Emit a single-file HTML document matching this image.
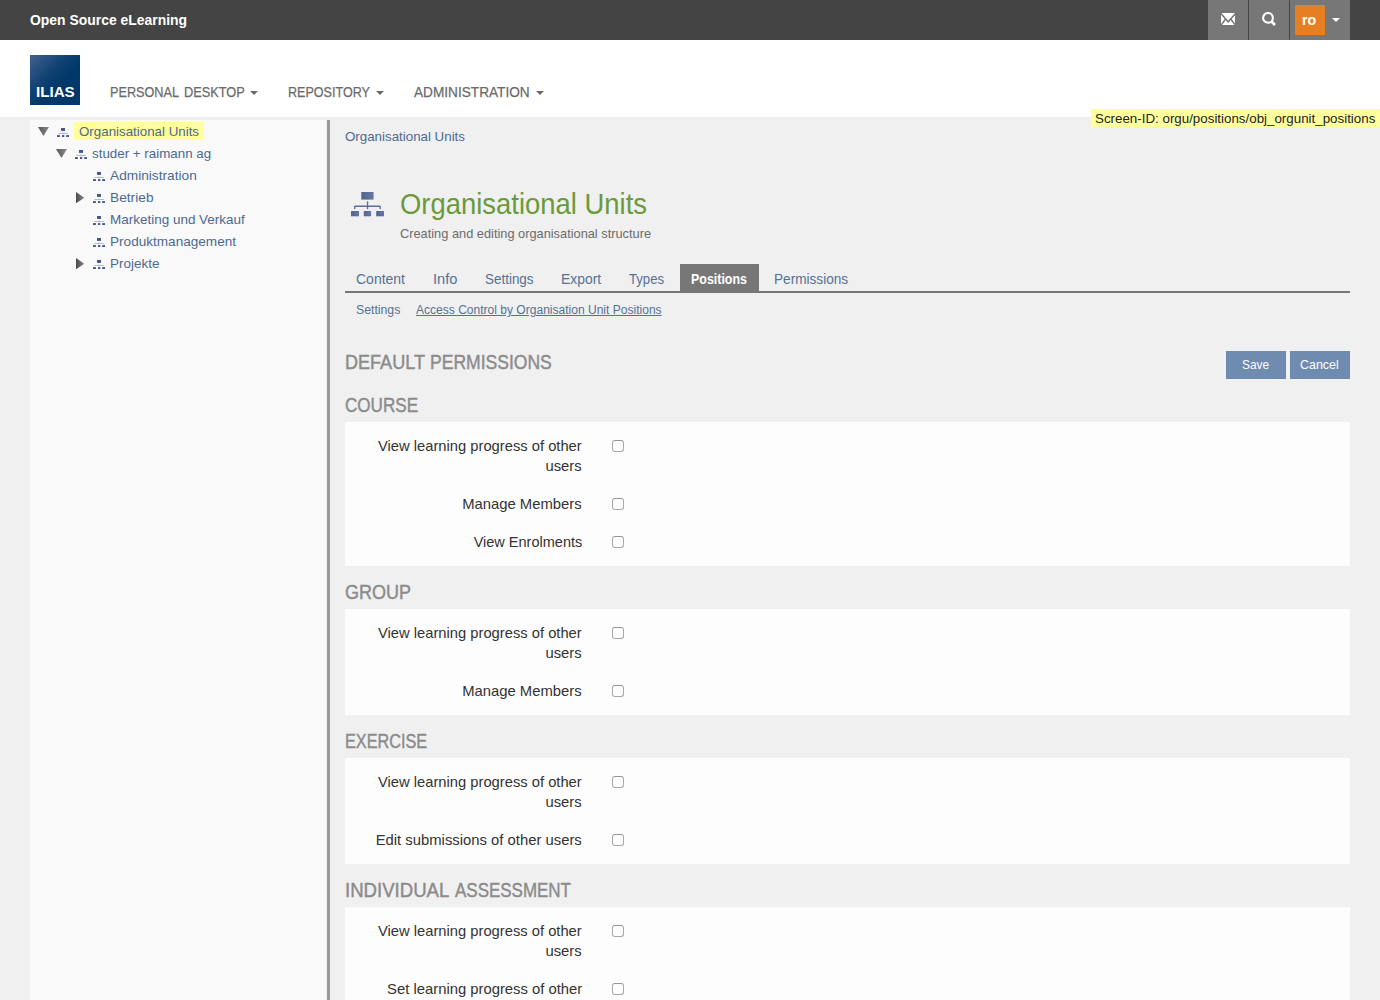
<!DOCTYPE html>
<html lang="en">
<head>
<meta charset="utf-8">
<title>Organisational Units</title>
<style>
html,body{margin:0;padding:0;}
body{width:1380px;height:1000px;overflow:hidden;position:relative;background:#f0f0f0;font-family:"Liberation Sans",sans-serif;font-size:14px;color:#222;}
.abs{position:absolute;white-space:nowrap;line-height:1;}
.oi{position:absolute;display:block;}
#topbar{position:absolute;left:0;top:0;width:1380px;height:40px;background:#444;}
#header{position:absolute;left:0;top:40px;width:1380px;height:77px;background:#fff;}
#hshadow{position:absolute;left:0;top:117px;width:1380px;height:2px;background:linear-gradient(#ececec,#f0f0f0);}
.brand{font-size:15.5px;font-weight:bold;color:#fff;}
.tb{position:absolute;top:0;height:40px;background:#777;}
#logo{position:absolute;left:30px;top:55px;width:50px;height:50px;background:linear-gradient(135deg,#42638c 0,#2a5280 18%,#114272 38%,#003969 58%);}
.lg{font-size:14.8px;font-weight:bold;color:#fff;}
.nav{font-size:14.5px;color:#6b6b6b;-webkit-text-stroke:0.25px #6b6b6b;}
.caret{position:absolute;width:0;height:0;border-left:4px solid transparent;border-right:4px solid transparent;border-top:4px solid #6b6b6b;}
#tree{position:absolute;left:30px;top:120px;width:296px;height:880px;background:#f9f9f9;}
#vbar{position:absolute;left:327px;top:120px;width:3px;height:880px;background:#999;}
#hl{position:absolute;left:74px;top:122px;width:130px;height:18px;background:#ffff9d;}
.tn,.bc{font-size:13.5px;color:#4d6990;}
.h1{font-size:29.3px;color:#6a9a3b;}
.sub{font-size:13.5px;color:#6b6b6b;}
.panel{position:absolute;left:345px;width:1005px;background:#fdfdfd;}
.sec{font-size:20px;color:#8a8a8a;-webkit-text-stroke:0.4px #8a8a8a;}
.lbl{font-size:14.6px;color:#333;}
.cb{position:absolute;left:612px;width:10px;height:10px;border:1px solid #a8a8a8;border-top-color:#949494;border-radius:3px;background:#fff;}
.tab{font-size:14.5px;color:#557196;}
.tabA{font-size:14.5px;color:#fff;font-weight:bold;}
#tabbg{position:absolute;left:680px;top:264px;width:79px;height:28px;background:#777;}
#tabline{position:absolute;left:345px;top:291px;width:1005px;height:2px;background:#777;}
.st{font-size:12.5px;color:#557196;}
.u{text-decoration:underline;}
.bt{position:absolute;top:351px;width:60px;height:28px;background:#6f8bb0;}
.btn{font-size:13.5px;color:#fff;}
.ro{font-size:15.5px;font-weight:bold;color:#fff;}
#scrbg{position:absolute;left:1091px;top:109px;width:289px;height:18px;background:#ffff9d;}
.scr{font-size:13.5px;color:#222;}
</style>
</head>
<body>
<div id="topbar"></div>
<div class="tb" style="left:1208px;width:40px"></div>
<div class="tb" style="left:1249px;width:40px"></div>
<div class="tb" style="left:1290px;width:60px"></div>
<svg class="oi" style="left:1220.8px;top:12.8px" width="14.4" height="12.2" viewBox="0 0 14.4 12.2"><rect width="14.4" height="12.2" fill="#fff"/><path d="M-0.4 0.2L7.2 8.7L14.8 0.2" fill="none" stroke="#777" stroke-width="1.6"/><path d="M-0.3 12.6L4.8 5.8M14.7 12.6L9.6 5.8" fill="none" stroke="#777" stroke-width="1.5"/></svg>
<svg class="oi" style="left:1262px;top:12px" width="15" height="15" viewBox="0 0 15 15"><circle cx="6" cy="5.9" r="4.9" fill="none" stroke="#fff" stroke-width="2.1"/><path d="M9.3 9.3L13 13" stroke="#fff" stroke-width="2.7"/></svg>
<div style="position:absolute;left:1295px;top:5px;width:30px;height:30px;background:#e67e22"></div>
<div class="caret" style="left:1332px;top:18px;border-top-color:#fff"></div>
<div id="header"></div>
<div id="hshadow"></div>
<div id="logo"></div>
<div class="caret" style="left:250px;top:91px"></div>
<div class="caret" style="left:376px;top:91px"></div>
<div class="caret" style="left:535.5px;top:91px"></div>
<div id="scrbg"></div>
<div id="tree"></div>
<div id="vbar"></div>
<div id="hl"></div>
<svg class="oi" style="left:351px;top:192px" width="33" height="25" viewBox="0 0 33 25"><defs><linearGradient id="og" x1="0" y1="0" x2="1" y2="0"><stop offset="0" stop-color="#55648f"/><stop offset="1" stop-color="#6478a6"/></linearGradient></defs><g fill="#5b6c9b"><rect x="10.3" y="0" width="12.3" height="7.6" fill="url(#og)"/><rect x="15.9" y="9.4" width="1.3" height="7.8"/><path d="M3 17V15A1.4 1.4 0 0 1 4.4 13.6H28.5A1.4 1.4 0 0 1 29.9 15V17H28.5V15H4.4V17Z"/><rect x="0" y="19" width="8" height="5.3" fill="url(#og)"/><rect x="12.8" y="19" width="7.3" height="5.3" fill="url(#og)"/><rect x="25.2" y="19" width="7.8" height="5.3" fill="url(#og)"/></g></svg>
<div id="tabbg"></div>
<div id="tabline"></div>
<div class="bt" style="left:1226px"></div>
<div class="bt" style="left:1290px"></div>
<div class="panel" style="top:422px;height:144px"></div>
<div class="panel" style="top:609px;height:106px"></div>
<div class="panel" style="top:758px;height:106px"></div>
<div class="panel" style="top:907px;height:93px"></div>
<div class="cb" style="top:440px"></div>
<div class="cb" style="top:498px"></div>
<div class="cb" style="top:536px"></div>
<div class="cb" style="top:627px"></div>
<div class="cb" style="top:685px"></div>
<div class="cb" style="top:776px"></div>
<div class="cb" style="top:834px"></div>
<div class="cb" style="top:925px"></div>
<div class="cb" style="top:983px"></div>
<svg class="oi" style="left:38px;top:127px" width="11" height="9" viewBox="0 0 11 9"><defs><linearGradient id="gd38" x1="0" y1="0" x2="1" y2="0"><stop offset="0" stop-color="#555"/><stop offset="1" stop-color="#8c8c8c"/></linearGradient></defs><path d="M0 0H11L5.5 9Z" fill="url(#gd38)"/></svg>
<svg class="oi" style="left:57px;top:128px" width="12.2" height="9" viewBox="0 0 12.2 9"><rect x="4" y="0" width="4" height="2.9" fill="#44548d"/><rect x="5.8" y="3.6" width="0.5" height="3" fill="#a3adc9"/><rect x="1.2" y="5" width="9.8" height="0.7" fill="#98a3c4"/><rect x="0" y="7.1" width="2.9" height="1.9" fill="#44548d"/><rect x="5" y="7.1" width="2.3" height="1.9" fill="#44548d"/><rect x="9.2" y="7.1" width="3" height="1.9" fill="#44548d"/></svg>
<svg class="oi" style="left:55.7px;top:149px" width="11" height="9" viewBox="0 0 11 9"><defs><linearGradient id="gd55" x1="0" y1="0" x2="1" y2="0"><stop offset="0" stop-color="#555"/><stop offset="1" stop-color="#8c8c8c"/></linearGradient></defs><path d="M0 0H11L5.5 9Z" fill="url(#gd55)"/></svg>
<svg class="oi" style="left:75px;top:150px" width="12.2" height="9" viewBox="0 0 12.2 9"><rect x="4" y="0" width="4" height="2.9" fill="#44548d"/><rect x="5.8" y="3.6" width="0.5" height="3" fill="#a3adc9"/><rect x="1.2" y="5" width="9.8" height="0.7" fill="#98a3c4"/><rect x="0" y="7.1" width="2.9" height="1.9" fill="#44548d"/><rect x="5" y="7.1" width="2.3" height="1.9" fill="#44548d"/><rect x="9.2" y="7.1" width="3" height="1.9" fill="#44548d"/></svg>
<svg class="oi" style="left:93px;top:172px" width="12.2" height="9" viewBox="0 0 12.2 9"><rect x="4" y="0" width="4" height="2.9" fill="#44548d"/><rect x="5.8" y="3.6" width="0.5" height="3" fill="#a3adc9"/><rect x="1.2" y="5" width="9.8" height="0.7" fill="#98a3c4"/><rect x="0" y="7.1" width="2.9" height="1.9" fill="#44548d"/><rect x="5" y="7.1" width="2.3" height="1.9" fill="#44548d"/><rect x="9.2" y="7.1" width="3" height="1.9" fill="#44548d"/></svg>
<svg class="oi" style="left:75.8px;top:191.9px" width="8.4" height="11.3" viewBox="0 0 8 11" preserveAspectRatio="none"><defs><linearGradient id="gr191" x1="0" y1="0" x2="1" y2="0"><stop offset="0" stop-color="#4a4a4a"/><stop offset="1" stop-color="#8a8a8a"/></linearGradient></defs><path d="M0 0V11L8 5.5Z" fill="url(#gr191)"/></svg>
<svg class="oi" style="left:93px;top:194px" width="12.2" height="9" viewBox="0 0 12.2 9"><rect x="4" y="0" width="4" height="2.9" fill="#44548d"/><rect x="5.8" y="3.6" width="0.5" height="3" fill="#a3adc9"/><rect x="1.2" y="5" width="9.8" height="0.7" fill="#98a3c4"/><rect x="0" y="7.1" width="2.9" height="1.9" fill="#44548d"/><rect x="5" y="7.1" width="2.3" height="1.9" fill="#44548d"/><rect x="9.2" y="7.1" width="3" height="1.9" fill="#44548d"/></svg>
<svg class="oi" style="left:93px;top:216px" width="12.2" height="9" viewBox="0 0 12.2 9"><rect x="4" y="0" width="4" height="2.9" fill="#44548d"/><rect x="5.8" y="3.6" width="0.5" height="3" fill="#a3adc9"/><rect x="1.2" y="5" width="9.8" height="0.7" fill="#98a3c4"/><rect x="0" y="7.1" width="2.9" height="1.9" fill="#44548d"/><rect x="5" y="7.1" width="2.3" height="1.9" fill="#44548d"/><rect x="9.2" y="7.1" width="3" height="1.9" fill="#44548d"/></svg>
<svg class="oi" style="left:93px;top:238px" width="12.2" height="9" viewBox="0 0 12.2 9"><rect x="4" y="0" width="4" height="2.9" fill="#44548d"/><rect x="5.8" y="3.6" width="0.5" height="3" fill="#a3adc9"/><rect x="1.2" y="5" width="9.8" height="0.7" fill="#98a3c4"/><rect x="0" y="7.1" width="2.9" height="1.9" fill="#44548d"/><rect x="5" y="7.1" width="2.3" height="1.9" fill="#44548d"/><rect x="9.2" y="7.1" width="3" height="1.9" fill="#44548d"/></svg>
<svg class="oi" style="left:75.8px;top:257.9px" width="8.4" height="11.3" viewBox="0 0 8 11" preserveAspectRatio="none"><defs><linearGradient id="gr257" x1="0" y1="0" x2="1" y2="0"><stop offset="0" stop-color="#4a4a4a"/><stop offset="1" stop-color="#8a8a8a"/></linearGradient></defs><path d="M0 0V11L8 5.5Z" fill="url(#gr257)"/></svg>
<svg class="oi" style="left:93px;top:260px" width="12.2" height="9" viewBox="0 0 12.2 9"><rect x="4" y="0" width="4" height="2.9" fill="#44548d"/><rect x="5.8" y="3.6" width="0.5" height="3" fill="#a3adc9"/><rect x="1.2" y="5" width="9.8" height="0.7" fill="#98a3c4"/><rect x="0" y="7.1" width="2.9" height="1.9" fill="#44548d"/><rect x="5" y="7.1" width="2.3" height="1.9" fill="#44548d"/><rect x="9.2" y="7.1" width="3" height="1.9" fill="#44548d"/></svg>
<span id="lg" class="abs lg" style="left:35.86px;top:84.57px;transform:scaleX(1.0236);transform-origin:0 0;">ILIAS</span>
<span id="brand" class="abs brand" style="left:29.91px;top:11.88px;transform:scaleX(0.8984);transform-origin:0 0;">Open Source eLearning</span>
<span id="nav1" class="abs nav" style="left:109.80px;top:84.53px;transform:scaleX(0.8738);transform-origin:0 0;">PERSONAL</span>
<span id="nav1b" class="abs nav" style="left:184.26px;top:84.53px;transform:scaleX(0.8812);transform-origin:0 0;">DESKTOP</span>
<span id="nav2" class="abs nav" style="left:288.23px;top:84.53px;transform:scaleX(0.8666);transform-origin:0 0;">REPOSITORY</span>
<span id="nav3" class="abs nav" style="left:414.31px;top:84.53px;transform:scaleX(0.9407);transform-origin:0 0;">ADMINISTRATION</span>
<span id="ro" class="abs ro" style="left:1302.45px;top:11.88px;transform:scaleX(0.9223);transform-origin:0 0;">ro</span>
<span id="scr" class="abs scr" style="left:1095.47px;top:111.57px;transform:scaleX(0.9882);transform-origin:0 0;">Screen-ID: orgu/positions/obj_orgunit_positions</span>
<span id="t1" class="abs tn" style="left:79.21px;top:124.57px;transform:scaleX(0.9873);transform-origin:0 0;">Organisational Units</span>
<span id="t2" class="abs tn" style="left:91.92px;top:146.57px;transform:scaleX(0.9896);transform-origin:0 0;">studer + raimann ag</span>
<span id="t3" class="abs tn" style="left:110.25px;top:168.57px;transform:scaleX(1.0141);transform-origin:0 0;">Administration</span>
<span id="t4" class="abs tn" style="left:109.85px;top:190.57px;transform:scaleX(1.0173);transform-origin:0 0;">Betrieb</span>
<span id="t5" class="abs tn" style="left:109.56px;top:212.57px;transform:scaleX(0.9979);transform-origin:0 0;">Marketing und Verkauf</span>
<span id="t6" class="abs tn" style="left:109.92px;top:234.57px;transform:scaleX(1.0059);transform-origin:0 0;">Produktmanagement</span>
<span id="t7" class="abs tn" style="left:109.95px;top:256.57px;transform:scaleX(0.9982);transform-origin:0 0;">Projekte</span>
<span id="bc" class="abs bc" style="left:344.93px;top:129.57px;transform:scaleX(0.9869);transform-origin:0 0;">Organisational Units</span>
<span id="h1" class="abs h1" style="left:400.04px;top:189.30px;transform:scaleX(0.9365);transform-origin:0 0;">Organisational Units</span>
<span id="sub" class="abs sub" style="left:399.72px;top:226.57px;transform:scaleX(0.9476);transform-origin:0 0;">Creating and editing organisational structure</span>
<span id="tab1" class="abs tab" style="left:356.19px;top:272.03px;transform:scaleX(0.9647);transform-origin:0 0;">Content</span>
<span id="tab2" class="abs tab" style="left:433.03px;top:272.03px;transform:scaleX(1.0116);transform-origin:0 0;">Info</span>
<span id="tab3" class="abs tab" style="left:484.78px;top:272.03px;transform:scaleX(0.9269);transform-origin:0 0;">Settings</span>
<span id="tab4" class="abs tab" style="left:560.57px;top:272.03px;transform:scaleX(0.9601);transform-origin:0 0;">Export</span>
<span id="tab5" class="abs tab" style="left:629.15px;top:272.03px;transform:scaleX(0.9059);transform-origin:0 0;">Types</span>
<span id="tab6" class="abs tabA" style="left:691.42px;top:272.03px;transform:scaleX(0.8577);transform-origin:0 0;">Positions</span>
<span id="tab7" class="abs tab" style="left:773.99px;top:272.03px;transform:scaleX(0.9385);transform-origin:0 0;">Permissions</span>
<span id="st1" class="abs st" style="left:356.46px;top:304.02px;transform:scaleX(0.9803);transform-origin:0 0;">Settings</span>
<span id="st2" class="abs st u" style="left:415.85px;top:304.02px;transform:scaleX(0.9632);transform-origin:0 0;">Access Control by Organisation Unit Positions</span>
<span id="dp" class="abs sec" style="left:344.77px;top:351.87px;transform:scaleX(0.9029);transform-origin:0 0;">DEFAULT</span>
<span id="dpb" class="abs sec" style="left:430.21px;top:351.87px;transform:scaleX(0.8767);transform-origin:0 0;">PERMISSIONS</span>
<span id="s1" class="abs sec" style="left:345.00px;top:395.07px;transform:scaleX(0.8538);transform-origin:0 0;">COURSE</span>
<span id="s2" class="abs sec" style="left:344.97px;top:582.07px;transform:scaleX(0.8995);transform-origin:0 0;">GROUP</span>
<span id="s3" class="abs sec" style="left:344.80px;top:731.07px;transform:scaleX(0.8111);transform-origin:0 0;">EXERCISE</span>
<span id="s4" class="abs sec" style="left:344.99px;top:880.07px;transform:scaleX(0.9298);transform-origin:0 0;">INDIVIDUAL</span>
<span id="s4b" class="abs sec" style="left:455.40px;top:880.07px;transform:scaleX(0.8485);transform-origin:0 0;">ASSESSMENT</span>
<span id="l1a" class="abs lbl" style="right:798.55px;top:438.64px;transform:scaleX(1.0098);transform-origin:100% 0;">View learning progress of other</span>
<span id="l1b" class="abs lbl" style="right:797.87px;top:458.64px;transform:scaleX(1.0155);transform-origin:100% 0;">users</span>
<span id="l2" class="abs lbl" style="right:798.62px;top:496.64px;transform:scaleX(1.0157);transform-origin:100% 0;">Manage Members</span>
<span id="l3" class="abs lbl" style="right:798.16px;top:534.64px;transform:scaleX(0.9940);transform-origin:100% 0;">View Enrolments</span>
<span id="l4a" class="abs lbl" style="right:798.55px;top:625.64px;transform:scaleX(1.0098);transform-origin:100% 0;">View learning progress of other</span>
<span id="l4b" class="abs lbl" style="right:797.87px;top:645.64px;transform:scaleX(1.0155);transform-origin:100% 0;">users</span>
<span id="l5" class="abs lbl" style="right:798.62px;top:683.64px;transform:scaleX(1.0157);transform-origin:100% 0;">Manage Members</span>
<span id="l6a" class="abs lbl" style="right:798.55px;top:774.64px;transform:scaleX(1.0098);transform-origin:100% 0;">View learning progress of other</span>
<span id="l6b" class="abs lbl" style="right:797.87px;top:794.64px;transform:scaleX(1.0155);transform-origin:100% 0;">users</span>
<span id="l7" class="abs lbl" style="right:797.94px;top:832.64px;transform:scaleX(1.0165);transform-origin:100% 0;">Edit submissions of other users</span>
<span id="l8a" class="abs lbl" style="right:798.55px;top:923.64px;transform:scaleX(1.0098);transform-origin:100% 0;">View learning progress of other</span>
<span id="l8b" class="abs lbl" style="right:797.87px;top:943.64px;transform:scaleX(1.0155);transform-origin:100% 0;">users</span>
<span id="l9" class="abs lbl" style="right:798.14px;top:981.64px;transform:scaleX(1.0152);transform-origin:100% 0;">Set learning progress of other</span>
<span id="b1" class="abs btn" style="left:1242.27px;top:357.57px;transform:scaleX(0.8808);transform-origin:0 0;">Save</span>
<span id="b2" class="abs btn" style="left:1300.02px;top:357.57px;transform:scaleX(0.9216);transform-origin:0 0;">Cancel</span>
</body>
</html>
